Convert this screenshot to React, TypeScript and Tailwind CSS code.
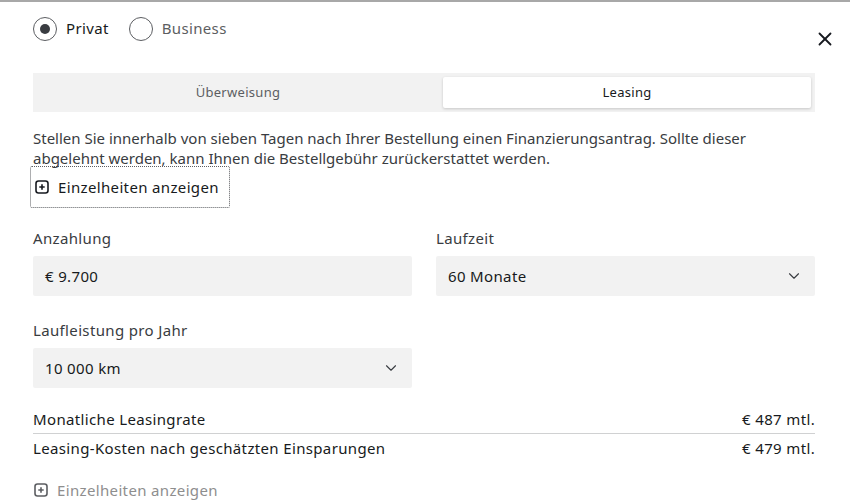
import { ChevronDown, X } from "lucide-react";

function PlusBox({ muted }: { muted?: boolean }) {
  return (
    <svg width="14" height="14" viewBox="0 0 14 14" className={muted ? "text-[#5c5e62]" : "text-[#171a20]"}>
      <rect x="1" y="1" width="12" height="12" rx="2.5" fill="none" stroke="currentColor" strokeWidth="1.6" />
      <path d="M7 4.3v5.4M4.3 7h5.4" stroke="currentColor" strokeWidth="1.6" />
    </svg>
  );
}

function Field({ label, value, select }: { label: string; value: string; select?: boolean }) {
  return (
    <div className="flex flex-col">
      <div className="text-[15px] leading-5 tracking-[0.35px] text-[#393c41] mb-[8px]">{label}</div>
      <div className="h-10 bg-[#f2f2f2] rounded-[2px] flex items-center justify-between px-3 text-[15px] tracking-[0.35px] text-[#171a20]">
        <span>{value}</span>
        {select && <ChevronDown size={18} strokeWidth={1.5} className="text-[#393c41]" />}
      </div>
    </div>
  );
}

export default function App() {
  return (
    <div
      className="w-[850px] h-[504px] bg-white border-t-2 border-[#a8a8a8] overflow-hidden relative"
      style={{ fontFamily: '"Noto Sans", "Open Sans", sans-serif' }}
    >
      <button className="absolute right-[14px] top-[26px] text-[#171a20]">
        <X size={22} strokeWidth={2} />
      </button>
      <div className="pl-[33px] pr-[35px]">
        <div className="flex items-center h-[54px] pb-[1px]">
          <div className="flex items-center gap-[9px]">
            <span className="w-6 h-6 rounded-full border border-[#5c5e62] flex items-center justify-center">
              <span className="w-[10px] h-[10px] rounded-full bg-[#393c41]" />
            </span>
            <span className="text-[15px] tracking-[0.35px] text-[#171a20]">Privat</span>
          </div>
          <div className="flex items-center gap-[9px] ml-[20px]">
            <span className="w-6 h-6 rounded-full border border-[#5c5e62]" />
            <span className="text-[15px] tracking-[0.35px] text-[#5c5e62]">Business</span>
          </div>
        </div>

        <div className="mt-[17px] h-[39px] bg-[#f2f2f2] flex p-1 pl-0">
          <div className="flex-1 flex items-center justify-center text-[13px] tracking-[0.3px] text-[#5c5e62]">Überweisung</div>
          <div className="w-[368px] bg-white rounded-[2px] shadow-[0_1px_3px_rgba(0,0,0,0.18)] flex items-center justify-center text-[13px] tracking-[0.3px] text-[#171a20]">
            Leasing
          </div>
        </div>

        <p className="mt-[16px] text-[15px] leading-5 text-[#393c41]">
          Stellen Sie innerhalb von sieben Tagen nach Ihrer Bestellung einen Finanzierungsantrag. Sollte dieser abgelehnt werden, kann Ihnen die Bestellgebühr zurückerstattet werden.
        </p>
        <div className="-ml-[3px] -mt-[2px] w-[200px] h-[42px] border border-dotted border-[#5c5e62] rounded-[2px] flex items-center gap-[9px] pl-[4px]">
          <PlusBox />
          <span className="text-[15px] tracking-[0.35px] text-[#171a20]">Einzelheiten anzeigen</span>
        </div>

        <div className="mt-[20px] grid grid-cols-2 gap-x-6">
          <Field label="Anzahlung" value="€ 9.700" />
          <Field label="Laufzeit" value="60 Monate" select />
        </div>
        <div className="mt-[24px] grid grid-cols-2 gap-x-6">
          <Field label="Laufleistung pro Jahr" value="10 000 km" select />
        </div>

        <div className="mt-[20px] flex justify-between text-[15px] tracking-[0.35px] text-[#171a20] pb-[2px] border-b border-[#d0d1d2]">
          <span>Monatliche Leasingrate</span>
          <span>€ 487 mtl.</span>
        </div>
        <div className="mt-[3px] flex justify-between text-[15px] tracking-[0.35px] text-[#171a20]">
          <span>Leasing-Kosten nach geschätzten Einsparungen</span>
          <span>€ 479 mtl.</span>
        </div>
        <div className="mt-[20px] flex items-center gap-[9px] pl-[1px]">
          <PlusBox muted />
          <span className="text-[15px] tracking-[0.35px] text-[#8e8e8e]">Einzelheiten anzeigen</span>
        </div>
      </div>
    </div>
  );
}
